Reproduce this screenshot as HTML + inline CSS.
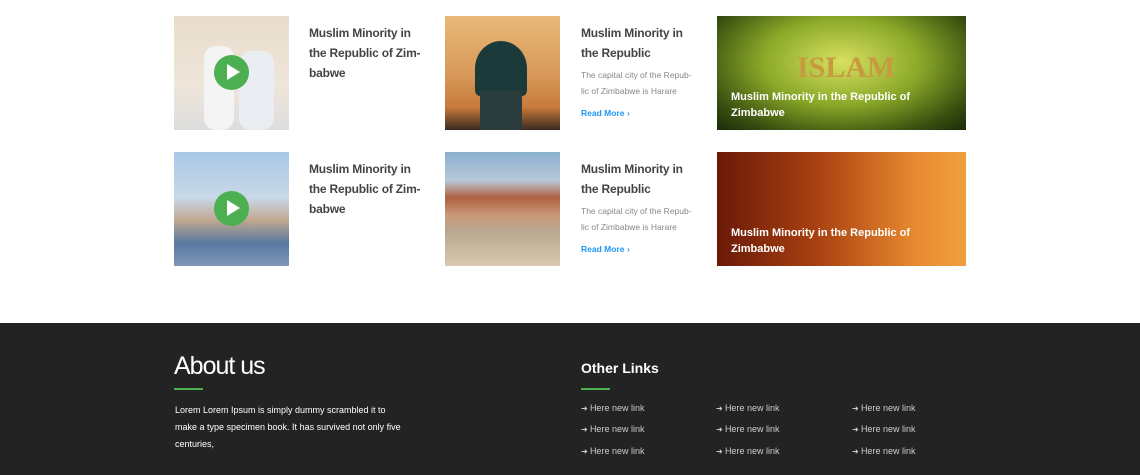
<!DOCTYPE html>
<html><head><meta charset="utf-8"><style>
*{margin:0;padding:0;box-sizing:border-box}
body{width:1140px;height:475px;background:#fff;font-family:"Liberation Sans",sans-serif;position:relative;overflow:hidden}
.a{position:absolute}
.img{position:absolute;width:115px;height:114px;overflow:hidden}
.t{position:absolute;font-size:12px;font-weight:bold;color:#444;line-height:20px;width:140px;white-space:nowrap;letter-spacing:-0.2px}
.d{position:absolute;font-size:8.5px;color:#888;line-height:16px;width:140px;white-space:nowrap}
.rm{position:absolute;font-size:8.5px;font-weight:bold;color:#2196f3}
.play{position:absolute;left:40px;top:39px;width:35px;height:35px;border-radius:50%;background:#4caf50}
.play:after{content:"";position:absolute;left:13px;top:9px;border-left:13px solid #fff;border-top:8.5px solid transparent;border-bottom:8.5px solid transparent}
.big{position:absolute;width:249px;height:114px;overflow:hidden}
.big span{position:absolute;left:14px;bottom:9px;color:#fff;font-size:11px;font-weight:bold;line-height:16px;width:220px}
footer{position:absolute;left:0;top:323px;width:1140px;height:152px;background:#232323}
.lk{position:absolute;font-size:9px;color:#ccc}
.lk:before{content:"➜ ";font-size:8px;color:#ccc}
</style></head><body>
<div class="img" style="left:174px;top:16px;background:linear-gradient(180deg,#e8dccb,#efe6da 60%,#ddd 100%)">
<div class="a" style="left:30px;top:30px;width:30px;height:84px;background:#f4f4f4;border-radius:12px"></div>
<div class="a" style="left:65px;top:35px;width:35px;height:79px;background:#eaeef2;border-radius:12px"></div>
<div class="play"></div></div>
<div class="t" style="left:309px;top:23px">Muslim Minority in<br>the Republic of Zim-<br>babwe</div>
<div class="img" style="left:445px;top:16px;background:linear-gradient(180deg,#e8b878,#d89a5a 50%,#c87a3a 80%,#3a2a20)">
<div class="a" style="left:30px;top:25px;width:52px;height:55px;background:#1d3a3a;border-radius:50% 50% 10% 10%"></div>
<div class="a" style="left:35px;top:75px;width:42px;height:39px;background:#2a3c3c"></div></div>
<div class="t" style="left:581px;top:23px">Muslim Minority in<br>the Republic</div>
<div class="d" style="left:581px;top:67px">The capital city of the Repub-<br>lic of Zimbabwe is Harare</div>
<div class="rm" style="left:581px;top:108px">Read More ›</div>
<div class="big" style="left:717px;top:16px;background:radial-gradient(ellipse at 50% 40%,#d8e060,#8aa828 45%,#3a5010 80%,#1a2a08)">
<div class="a" style="left:80px;top:35px;font-size:30px;font-weight:bold;color:#c89a40;font-family:'Liberation Serif',serif">ISLAM</div>
<span>Muslim Minority in the Republic of<br>Zimbabwe</span></div>

<div class="img" style="left:174px;top:152px;background:linear-gradient(180deg,#a8c8e8,#c8d8e8 40%,#c0a890 60%,#5878a0 80%,#8098b8)"><div class="play"></div></div>
<div class="t" style="left:309px;top:159px">Muslim Minority in<br>the Republic of Zim-<br>babwe</div>
<div class="img" style="left:445px;top:152px;background:linear-gradient(180deg,#8ab0d0,#b8c8d8 25%,#b06040 40%,#c89878 55%,#b8a890 70%,#d8c8b0)"></div>
<div class="t" style="left:581px;top:159px">Muslim Minority in<br>the Republic</div>
<div class="d" style="left:581px;top:203px">The capital city of the Repub-<br>lic of Zimbabwe is Harare</div>
<div class="rm" style="left:581px;top:244px">Read More ›</div>
<div class="big" style="left:717px;top:152px;background:linear-gradient(90deg,#6a1a08,#a84010 40%,#e88a30 80%,#f0a040)"><span>Muslim Minority in the Republic of<br>Zimbabwe</span></div>

<footer>
<div class="a" style="left:174px;top:29px;font-size:25px;color:#fff;letter-spacing:-1px">About us</div>
<div class="a" style="left:174px;top:65px;width:29px;height:2px;background:#4caf50"></div>
<div class="a" style="left:175px;top:79px;width:300px;font-size:9px;line-height:17px;color:#fff;white-space:nowrap">Lorem Lorem Ipsum is simply dummy scrambled it to<br>make a type specimen book. It has survived not only five<br>centuries,</div>
<div class="a" style="left:581px;top:37px;font-size:14px;color:#fff;font-weight:bold">Other Links</div>
<div class="a" style="left:581px;top:65px;width:29px;height:2px;background:#4caf50"></div>
<div class="lk" style="left:581px;top:80px">Here new link</div>
<div class="lk" style="left:716px;top:80px">Here new link</div>
<div class="lk" style="left:852px;top:80px">Here new link</div>
<div class="lk" style="left:581px;top:101px">Here new link</div>
<div class="lk" style="left:716px;top:101px">Here new link</div>
<div class="lk" style="left:852px;top:101px">Here new link</div>
<div class="lk" style="left:581px;top:123px">Here new link</div>
<div class="lk" style="left:716px;top:123px">Here new link</div>
<div class="lk" style="left:852px;top:123px">Here new link</div>
</footer>
</body></html>
